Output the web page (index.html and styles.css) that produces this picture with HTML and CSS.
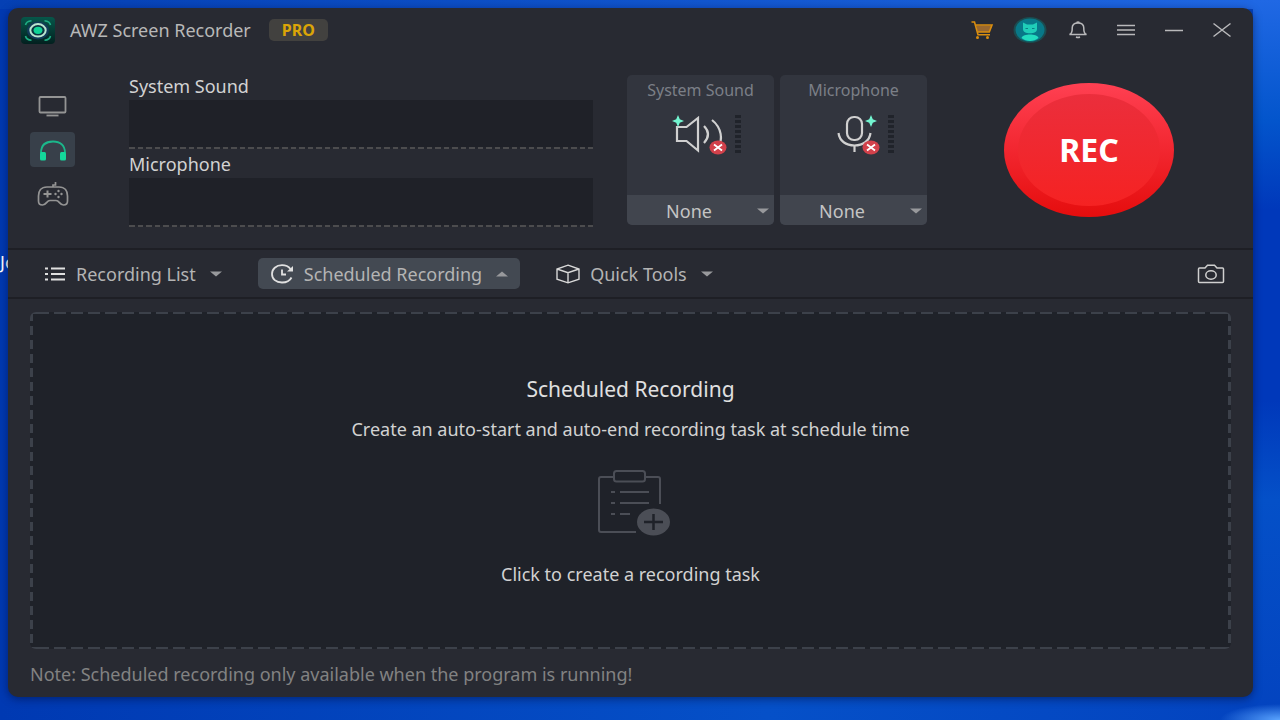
FILE: index.html
```html
<!DOCTYPE html>
<html lang="en">
<head>
    <meta charset="UTF-8">
    <title>AWZ Screen Recorder</title>
    <link rel="stylesheet" href="styles.css">
</head>
<body>
<span class="desktop-label">Jo</span>
<div class="window">
    <header class="titlebar">
        <svg class="logo" viewBox="0 0 34 27" width="34" height="27">
            <defs>
                <linearGradient id="logoBg" x1="0" y1="0" x2="0" y2="1">
                    <stop offset="0" stop-color="#06574a"/>
                    <stop offset="1" stop-color="#03201f"/>
                </linearGradient>
            </defs>
            <rect width="34" height="27" rx="4" fill="url(#logoBg)"/>
            <ellipse cx="17" cy="13.5" rx="11" ry="9" fill="#123a58"/>
            <g fill="none" stroke="#1fae85" stroke-width="1.6">
                <path d="M4.500 8C5 5.500 7 4 10.500 3.700"/>
                <path d="M23.500 3.700C27 4 29 5.500 29.500 8"/>
                <path d="M4.500 19C5 21.500 7 23 10.500 23.300"/>
                <path d="M23.500 23.300C27 23 29 21.500 29.500 19"/>
            </g>
            <ellipse cx="17" cy="13.300" rx="7.700" ry="6.200" fill="#0c3440" stroke="#b9e6cf" stroke-width="2"/>
            <ellipse cx="17" cy="13.300" rx="4.400" ry="3.600" fill="#10d396"/>
        </svg>
        <h1>AWZ Screen Recorder</h1>
        <span class="badge">PRO</span>
        <div class="window-actions">
            <button type="button" aria-label="Shop">
                <svg viewBox="0 0 24 20" width="24" height="20">
                    <path d="M6 5.500H22L19.500 12H7.500z" fill="#9a682f"/>
                    <path d="M1.500 2H4.500L8 14.700H20M5.300 5H22L19.300 12H7.300" fill="none" stroke="#d98d0f" stroke-width="1.600"/>
                    <circle cx="7.500" cy="17.500" r="1.500" fill="#d98d0f"/>
                    <circle cx="17.500" cy="17.500" r="1.500" fill="#d98d0f"/>
                </svg>
            </button>
            <button type="button" aria-label="Account">
                <svg viewBox="0 0 34 28" width="34" height="28">
                    <ellipse cx="17" cy="14" rx="16.500" ry="13" fill="#1b4c50"/>
                    <ellipse cx="17" cy="14" rx="14.500" ry="11.500" fill="#087888"/>
                    <path d="M10 6.500L14 8.500H20L24 6.500V13C24 16 21 17.300 17 17.300S10 16 10 13z" fill="#1fcdb8"/>
                    <path d="M8.500 22C9.500 19.500 13 18.600 17 18.600S24.500 19.500 25.500 22C21 26 13 26 8.500 22z" fill="#22dcbf"/>
                    <path d="M12.500 12.500H15M19 12.500H21.500" stroke="#0a7f86" stroke-width="1.200"/>
                </svg>
            </button>
            <button type="button" aria-label="Notifications">
                <svg class="line" viewBox="0 0 20 20" width="20" height="20">
                    <path d="M1.500 14.500C4 13.500 4.200 12 4.200 9V8C4.200 4.800 6.500 3 10 3S15.800 4.800 15.800 8V9C15.800 12 16 13.500 18.500 14.500zM8.500 2.500Q10 1.300 11.500 2.500M8 17Q10 18 12 17"/>
                </svg>
            </button>
            <button type="button" aria-label="Menu">
                <svg class="line" viewBox="0 0 20 14" width="20" height="14">
                    <path d="M1 2.500H19M1 7H19M1 11.500H19"/>
                </svg>
            </button>
            <button type="button" aria-label="Minimize">
                <svg class="line" viewBox="0 0 20 14" width="20" height="14">
                    <path d="M1 7.500H19"/>
                </svg>
            </button>
            <button type="button" aria-label="Close">
                <svg class="line" viewBox="0 0 20 16" width="20" height="16">
                    <path d="M1.500 1.500L18.500 14.500M18.500 1.500L1.500 14.500"/>
                </svg>
            </button>
        </div>
    </header>

    <section class="recorder">
        <nav class="modes">
            <button type="button" aria-label="Video recorder">
                <svg viewBox="0 0 30 22" width="30" height="22">
                    <rect x="1.500" y="2" width="26" height="15.500" rx="1" fill="none" stroke="#949494" stroke-width="1.800"/>
                    <path d="M8.500 20.500H20.500" stroke="#949494" stroke-width="1.800"/>
                </svg>
            </button>
            <button type="button" class="selected" aria-label="Audio recorder">
                <svg viewBox="0 0 28 22" width="28" height="22">
                    <path d="M2 14C2 6 7 2.500 14 2.500S26 6 26 14" fill="none" stroke="#1bb78b" stroke-width="1.800"/>
                    <rect x="1" y="13" width="6" height="8.500" rx="1.500" fill="#14d79b"/>
                    <rect x="21" y="13" width="6" height="8.500" rx="1.500" fill="#14d79b"/>
                </svg>
            </button>
            <button type="button" aria-label="Game recorder">
                <svg viewBox="0 0 32 26" width="32" height="26">
                    <g fill="none" stroke="#949494" stroke-width="1.700">
                        <path d="M10 6H22C28 6 30.500 10 30.500 15V20C30.500 23 29 24 26.500 24C22.500 24 22.500 19.500 19 19.500H13C9.500 19.500 9.500 24 5.500 24C3 24 1.500 23 1.500 20V15C1.500 10 4 6 10 6z"/>
                        <path d="M16 6V4H18.500V1"/>
                        <path d="M10.500 9.500V16.500M6.500 13H14.500" stroke-width="2"/>
                    </g>
                    <g fill="#949494">
                        <circle cx="21.500" cy="10" r="1.200"/>
                        <circle cx="18.500" cy="13" r="1.200"/>
                        <circle cx="24.500" cy="13" r="1.200"/>
                        <circle cx="21.500" cy="16" r="1.200"/>
                    </g>
                </svg>
            </button>
        </nav>
        <div class="waves">
            <h2>System Sound</h2>
            <div class="wave"></div>
            <h2>Microphone</h2>
            <div class="wave"></div>
        </div>
        <div class="sources">
            <div class="source">
                <label for="system">System Sound</label>
                <div class="source-icon">
                    <svg viewBox="0 0 56 42" width="56" height="42">
                        <path d="M4 14V28H13.500L25 37.500V5L13.500 14zM31 13Q39 21 31 30M39 7C49 15 50 27 45 34" fill="none" stroke="#d0d0d0" stroke-width="2.200"/>
                        <path d="M5 2L6.800 6.200L11 8L6.800 9.800L5 14L3.200 9.800L-1 8L3.200 6.200z" fill="#73f5d0"/>
                        <ellipse cx="45" cy="34.500" rx="8.500" ry="7" fill="#d2414b"/>
                        <path d="M41 31.500L49 37.500M49 31.500L41 37.500" stroke="#fff" stroke-width="1.800"/>
                    </svg>
                    <span class="meter"></span>
                </div>
                <div class="select">
                    <select id="system"><option>None</option></select>
                    <svg class="caret" viewBox="0 0 12 6" width="12" height="6"><path d="M0 0.500H12L6 5.500z"/></svg>
                </div>
            </div>
            <div class="source">
                <label for="mic">Microphone</label>
                <div class="source-icon">
                    <svg viewBox="0 0 56 42" width="56" height="42">
                        <rect x="21" y="4" width="15" height="23" rx="7" fill="none" stroke="#d0d0d0" stroke-width="2.200"/>
                        <path d="M12.500 20C13.500 28 20 32.500 28.500 32.500S43.500 28 44.500 20M28.500 32V39" fill="none" stroke="#d0d0d0" stroke-width="2.200"/>
                        <path d="M45 2L46.800 6.200L51 8L46.800 9.800L45 14L43.200 9.800L39 8L43.200 6.200z" fill="#73f5d0"/>
                        <ellipse cx="45" cy="34.500" rx="8.500" ry="7" fill="#d2414b"/>
                        <path d="M41 31.500L49 37.500M49 31.500L41 37.500" stroke="#fff" stroke-width="1.800"/>
                    </svg>
                    <span class="meter"></span>
                </div>
                <div class="select">
                    <select id="mic"><option>None</option></select>
                    <svg class="caret" viewBox="0 0 12 6" width="12" height="6"><path d="M0 0.500H12L6 5.500z"/></svg>
                </div>
            </div>
        </div>
        <div class="record">
            <button type="button" class="rec"><span>REC</span></button>
        </div>
    </section>

    <nav class="toolbar">
        <button type="button" class="tab">
            <svg viewBox="0 0 22 18" width="22" height="18">
                <path d="M1 3.500H4M1 9H4M1 14.500H4M7 3.500H21M7 9H21M7 14.500H21" stroke="#e0e0e0" stroke-width="2.200"/>
            </svg>
            Recording List
            <svg class="caret" viewBox="0 0 12 6" width="12" height="6"><path d="M0 0.500H12L6 5.500z"/></svg>
        </button>
        <button type="button" class="tab selected">
            <svg viewBox="0 0 24 20" width="24" height="20">
                <path d="M20.500 5C18.500 2.500 15.500 1.200 12 1.200C6 1.200 2 5 2 10S6 18.500 12 18.500C16.500 18.500 20 16.500 21.500 13.500M12 5.500V10.500H16" fill="none" stroke="#e0e0e0" stroke-width="1.800"/>
                <path d="M23 2V7.500H17z" fill="#e0e0e0"/>
            </svg>
            Scheduled Recording
            <svg class="caret" viewBox="0 0 12 6" width="12" height="6"><path d="M0 5.500H12L6 0.500z"/></svg>
        </button>
        <button type="button" class="tab">
            <svg viewBox="0 0 24 20" width="24" height="20">
                <path d="M12 1.200L23 5V15.200L12 18.800L1 15.200V5zM1 5L12 8.700L23 5M12 8.700V18.800" fill="none" stroke="#d8d8d8" stroke-width="1.400"/>
            </svg>
            Quick Tools
            <svg class="caret" viewBox="0 0 12 6" width="12" height="6"><path d="M0 0.500H12L6 5.500z"/></svg>
        </button>
        <button type="button" class="snapshot" aria-label="Screenshot">
            <svg viewBox="0 0 28 20" width="28" height="20">
                <path d="M2.500 4H8L10.500 1.300H17.500L20 4H25.500Q26.500 4 26.500 5V17.500Q26.500 18.500 25.500 18.500H2.500Q1.500 18.500 1.500 17.500V5Q1.500 4 2.500 4z" fill="none" stroke="#d0d0d0" stroke-width="1.500"/>
                <ellipse cx="14" cy="11" rx="5.200" ry="4.200" fill="none" stroke="#d0d0d0" stroke-width="1.500"/>
            </svg>
        </button>
    </nav>

    <main>
        <div class="dropzone">
            <h2>Scheduled Recording</h2>
            <p>Create an auto-start and auto-end recording task at schedule time</p>
            <button type="button" class="create">
                <svg viewBox="-8 0 82 68" width="82" height="68">
                    <g fill="none" stroke="#4b4e56" stroke-width="2">
                        <path d="M17 8H4Q2 8 2 10V61Q2 63 4 63H39M47 8H61Q63 8 63 10V35"/>
                        <rect x="17" y="2" width="31" height="10.500" rx="2.500"/>
                        <path d="M14 23H18M23 23H52M14 34H18M23 34H52M14 45H18M23 45H33"/>
                    </g>
                    <ellipse cx="56.500" cy="53" rx="16.500" ry="13.500" fill="#4b4e56"/>
                    <path d="M47 53H66M56.500 45V61" stroke="#1f2229" stroke-width="2.500"/>
                </svg>
                Click to create a recording task
            </button>
        </div>
        <p class="note">Note: Scheduled recording only available when the program is running!</p>
    </main>
</div>
</body>
</html>
```
FILE: styles.css
```css
*{
    margin: 0;
    padding: 0;
    box-sizing: border-box;
}
body{
    min-height: 100vh;
    padding: 8px 27px 23px 8px;
    display: flex;
    font: 18px/20px "Noto Sans", "Open Sans", sans-serif;
    color: #d2d2d2;
    background:
        radial-gradient(ellipse 60px 16px at 100% 100%, #5aa4ff, rgba(63, 141, 240, 0)),
        linear-gradient(#2068e4, #0355cc 120px, #0038ba 210px, #0038ba 400px, #0450c8 500px, #0343bf) right / 27px 100% no-repeat,
        linear-gradient(90deg, #0540b4, #0d50c8 40%, #2068e4) top / 100% 9px no-repeat,
        linear-gradient(90deg, #0039b2, #0550c8 60%, #0343bf);
}
button, select{
    font: inherit;
    color: inherit;
    background: none;
    border: none;
    cursor: pointer;
}
h1, h2{
    font-size: 18px;
    font-weight: normal;
}
svg{
    display: block;
    flex: none;
}
.desktop-label{
    position: absolute;
    left: 0;
    top: 252px;
    color: #fff;
}
.window{
    position: relative;
    flex: 1;
    display: flex;
    flex-direction: column;
    background: #282a32;
    border-radius: 10px;
    box-shadow: 0 2px 8px rgba(0, 10, 50, 0.5);
}
.titlebar{
    height: 44px;
    padding: 0 14px 0 13px;
    display: flex;
    align-items: center;
}
.titlebar h1{
    margin-left: 15px;
    color: #b8b8b8;
}
.badge{
    margin-left: 18px;
    width: 59px;
    text-align: center;
    line-height: 22px;
    font-size: 16px;
    font-weight: bold;
    color: #dba507;
    background: #42413f;
    border-radius: 5px;
}
.window-actions{
    margin-left: auto;
    display: flex;
    gap: 14px;
}
.window-actions button{
    width: 34px;
    height: 28px;
    display: flex;
    align-items: center;
    justify-content: center;
}
.line{
    fill: none;
    stroke: #b9b9bb;
    stroke-width: 1.5;
}
.recorder{
    padding: 23px 79px 17px 22px;
    display: flex;
    align-items: flex-start;
}
.modes{
    width: 45px;
    margin-top: 13px;
    display: flex;
    flex-direction: column;
    gap: 9px;
}
.modes button{
    height: 35px;
    display: flex;
    align-items: center;
    justify-content: center;
    border-radius: 4px;
}
.modes .selected{
    background: #38404a;
}
.waves{
    flex: 0 1 464px;
    margin: 0 34px 0 54px;
}
.waves h2{
    line-height: 22px;
    margin-bottom: 3px;
}
.wave{
    height: 49px;
    margin-bottom: 4px;
    background: repeating-linear-gradient(90deg, #4c4c4e 0 6px, #24262d 6px 9px, #4c4c4e 9px 14px, #24262d 14px 17px) bottom / 100% 2px no-repeat #1f2128;
}
.sources{
    display: flex;
    gap: 6px;
}
.source{
    width: 147px;
    display: flex;
    flex-direction: column;
    background: #32353e;
    border-radius: 5px;
    overflow: hidden;
}
.source label{
    padding-top: 5px;
    text-align: center;
    font-size: 16px;
    color: #7b7f87;
}
.source-icon{
    height: 95px;
    padding: 13px 0 0 46px;
    display: flex;
    gap: 6px;
}
.source-icon svg{
    overflow: visible;
}
.meter{
    width: 6px;
    height: 39px;
    margin-top: 2px;
    background: repeating-linear-gradient(#20232a 0 3px, transparent 3px 4px, transparent 4px 5px);
}
.select{
    position: relative;
    background: #41454e;
}
.select select{
    width: 100%;
    height: 30px;
    padding-top: 2px;
    padding-right: 23px;
    appearance: none;
    text-align: center;
    text-align-last: center;
    color: #c4c4c4;
}
.caret{
    fill: #98999c;
}
.select .caret{
    position: absolute;
    right: 5px;
    top: 13px;
    pointer-events: none;
}
.record{
    margin: 8px 0 0 auto;
}
.rec{
    width: 170px;
    height: 134px;
    padding: 11px 14px;
    border-radius: 50%;
    background: linear-gradient(#ff4052, #e50d0d);
}
.rec span{
    height: 100%;
    display: flex;
    align-items: center;
    justify-content: center;
    font-size: 32px;
    font-weight: bold;
    color: #fff;
    border-radius: 50%;
    background: linear-gradient(#eb2e3c, #f52222);
}
.toolbar{
    height: 51px;
    padding: 0 28px 0 24px;
    display: flex;
    align-items: center;
    gap: 24px;
    border-top: 2px solid #1e1f25;
    border-bottom: 2px solid #1e1f25;
}
.tab{
    height: 31px;
    padding: 0 12px;
    display: flex;
    align-items: center;
    gap: 10px;
    color: #b4b4b4;
    border-radius: 5px;
}
.tab .caret{
    margin-left: 4px;
}
.tab.selected{
    background: #434952;
}
.snapshot{
    margin-left: auto;
}
main{
    flex: 1;
    padding: 13px 22px 13px;
    display: flex;
    flex-direction: column;
}
.dropzone{
    --dash: #3c414a;
    --corner: linear-gradient(var(--dash), var(--dash));
    flex: 1;
    padding-top: 67px;
    display: flex;
    flex-direction: column;
    align-items: center;
    border-radius: 6px;
    background:
        var(--corner) 0 0 / 18px 2px no-repeat,
        var(--corner) 100% 0 / 12px 2px no-repeat,
        var(--corner) 0 100% / 18px 2px no-repeat,
        var(--corner) 100% 100% / 12px 2px no-repeat,
        repeating-linear-gradient(90deg, var(--dash) 0 12px, transparent 12px 17px) 7px 0 / 100% 2px no-repeat,
        repeating-linear-gradient(90deg, var(--dash) 0 12px, transparent 12px 17px) 7px 100% / 100% 2px no-repeat,
        repeating-linear-gradient(var(--dash) 0 9px, transparent 9px 14px) 0 0 / 3px 100% no-repeat,
        repeating-linear-gradient(var(--dash) 0 9px, transparent 9px 14px) 100% 0 / 3px 100% no-repeat,
        #1f2229;
}
.dropzone h2{
    margin-bottom: 20px;
    font-size: 21px;
    color: #e0e0e0;
}
.create{
    margin-top: 30px;
    display: flex;
    flex-direction: column;
    align-items: center;
    gap: 27px;
}
.note{
    margin-top: 15px;
    color: #828282;
}
```
